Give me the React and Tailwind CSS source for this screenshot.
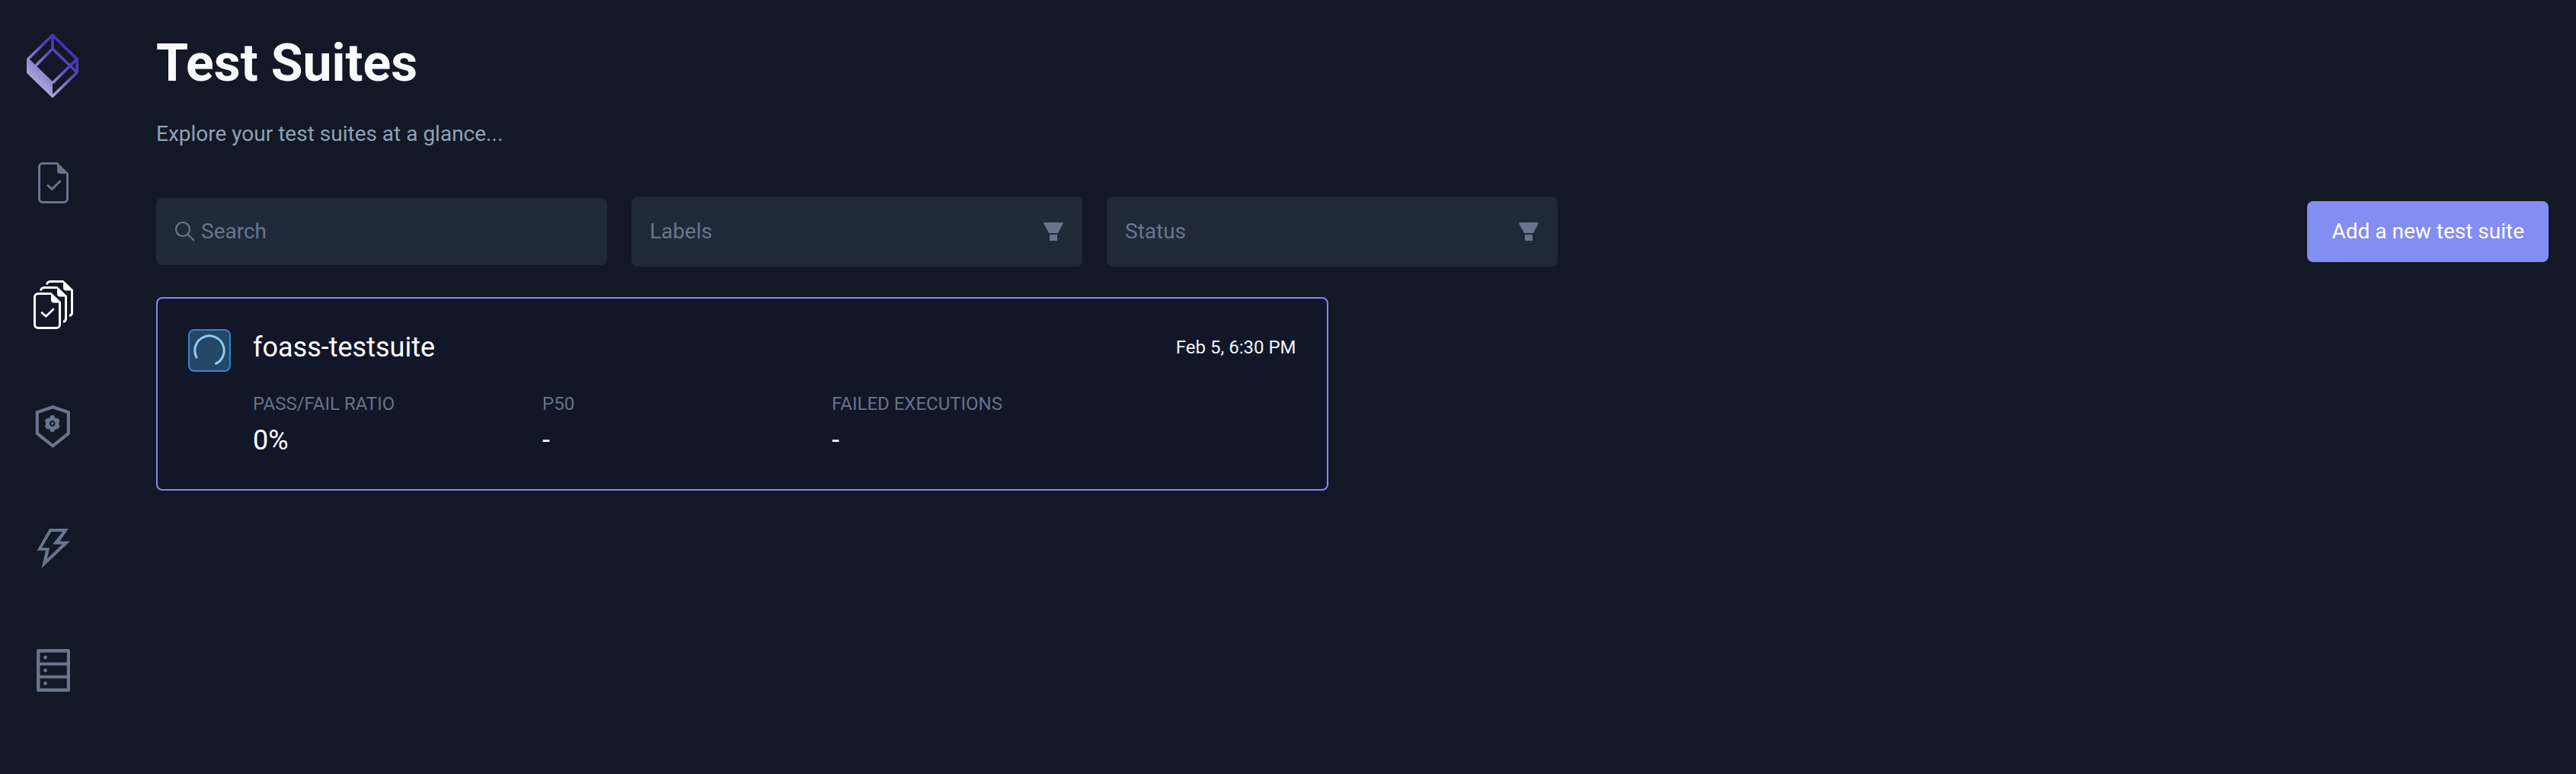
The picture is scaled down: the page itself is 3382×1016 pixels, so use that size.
import React from "react";

function Logo() {
  return (
    <svg width="70" height="84" viewBox="35 44 70 84" fill="none" className="overflow-visible" aria-hidden="true">
      <defs>
        <linearGradient id="logo-fade" gradientUnits="userSpaceOnUse" x1="42" y1="114" x2="88" y2="64">
          <stop offset="0" stopColor="#b5b5dc" />
          <stop offset="0.35" stopColor="#8f87cf" />
          <stop offset="0.7" stopColor="#5a48bd" />
          <stop offset="1" stopColor="#4a2fbd" />
        </linearGradient>
      </defs>
      <g stroke="url(#logo-fade)" strokeWidth="3.6" strokeLinejoin="round">
        <path d="M69 46 L101.2 77.5 V95 L69 126.2 L36.8 95 V77.5 Z" />
        <path d="M69.01 46 L69 64 L101 95" />
        <path d="M69 64 L47 86" />
        <path d="M101 77.5 L69 109" />
      </g>
      <path d="M35 77 L38 77 L69 107 V127.5 L35 95.5 Z" fill="url(#logo-fade)" />
    </svg>
  );
}

function TestIcon() {
  return (
    <svg width="40" height="54" viewBox="50 213 40 54" fill="none" stroke="currentColor" strokeWidth="3" aria-hidden="true">
      <path d="M75.5 214.5 H56 a4.5 4.5 0 0 0 -4.5 4.5 V261 a4.5 4.5 0 0 0 4.5 4.5 H84 a4.5 4.5 0 0 0 4.5 -4.5 V228" />
      <path d="M75 213 L90 227.5 V228 H79 a4 4 0 0 1 -4 -4 Z" fill="currentColor" stroke="none" />
      <path d="M63 243.5 L68.3 248.3 L78.8 238" strokeLinecap="round" />
    </svg>
  );
}

function TestSuiteIcon() {
  return (
    <svg width="52" height="64" viewBox="44 368 52 64" fill="none" stroke="currentColor" strokeWidth="3" aria-hidden="true">
      <path d="M67 385.5 H50 a4.5 4.5 0 0 0 -4.5 4.5 V426 a4.5 4.5 0 0 0 4.5 4.5 H74 a4.5 4.5 0 0 0 4.5 -4.5 V397" />
      <path d="M67 384 L80 396.5 V397.5 H71 a4 4 0 0 1 -4 -4 Z" fill="currentColor" stroke="none" />
      <path d="M55 410.5 L60.3 415.3 L70 406" strokeWidth="2.6" strokeLinecap="round" />
      <path d="M53.5 381.5 a4.5 4.5 0 0 1 4.5 -4 H75 M86.5 389 V418 a4.5 4.5 0 0 1 -3.5 4.5" />
      <path d="M75 376 L88 388.5 V389.5 H79 a4 4 0 0 1 -4 -4 Z" fill="currentColor" stroke="none" />
      <path d="M61.5 373.5 a4.5 4.5 0 0 1 4.5 -4 H83 M94.5 381 V410 a4.5 4.5 0 0 1 -3.5 4.5" />
      <path d="M83 368 L96 380.5 V381.5 H87 a4 4 0 0 1 -4 -4 Z" fill="currentColor" stroke="none" />
    </svg>
  );
}

function ShieldIcon() {
  return (
    <svg width="46" height="56" viewBox="47 532 46 56" fill="none" stroke="currentColor" className="overflow-visible" aria-hidden="true">
      <path d="M69.3 534.3 L89.8 541.3 V569 L69.3 585.3 L48.8 569 V541.3 Z" strokeWidth="4.2" />
      <g strokeWidth="5.4">
        <path d="M68.7 545.3 V550 M68.7 562 V566.7" />
        <path d="M59.9 550.9 L63.5 553 M73.9 559 L77.5 561.1" />
        <path d="M77.5 550.9 L73.9 553 M63.5 559 L59.9 561.1" />
      </g>
      <circle cx="68.7" cy="556" r="6.2" strokeWidth="5" />
      <circle cx="68.7" cy="556" r="1.7" fill="currentColor" stroke="none" />
    </svg>
  );
}

function TriggerIcon() {
  return (
    <svg width="44" height="52" viewBox="48 694 44 52" fill="currentColor" fillRule="evenodd" aria-hidden="true">
      <path d="M65 694 H90 L78.5 710.5 H92 L54.5 746 L60 722.8 H48.5 Z M67.3 698 L55 719 H65.2 L62 733.5 L81.5 714.5 H69 L82.2 698 Z" />
    </svg>
  );
}

function ExecutorIcon() {
  return (
    <svg width="44" height="56" viewBox="48 852 44 56" aria-hidden="true">
      <path
        fill="currentColor"
        fillRule="evenodd"
        d="M50 852 H90 a2 2 0 0 1 2 2 V906 a2 2 0 0 1 -2 2 H50 a2 2 0 0 1 -2 -2 V854 a2 2 0 0 1 2 -2 Z M52.5 856.5 V869.5 H87.8 V856.5 Z M52.5 873.5 V886.5 H87.8 V873.5 Z M52.5 890.5 V903.5 H87.8 V890.5 Z"
      />
      <g fill="currentColor">
        <circle cx="59.5" cy="863" r="2.4" />
        <circle cx="59.5" cy="880" r="2.4" />
        <circle cx="59.5" cy="897" r="2.4" />
      </g>
    </svg>
  );
}

function SearchIcon() {
  return (
    <svg width="26" height="26" viewBox="0 0 26 26" fill="none" stroke="currentColor" strokeWidth="2.2" aria-hidden="true">
      <circle cx="10" cy="10" r="9" />
      <path d="M16.3 16.3 L25 25" />
    </svg>
  );
}

function FunnelIcon() {
  return (
    <svg width="26" height="24" viewBox="0 0 26 24" fill="currentColor" aria-hidden="true">
      <path d="M1 0 H25 a1 1 0 0 1 0.7 1.4 L19 14 H7 L0.3 1.4 A1 1 0 0 1 1 0 Z" />
      <path d="M8 16 H18 V24 H8 Z" />
    </svg>
  );
}

function RunningIcon() {
  return (
    <span className="flex size-14 shrink-0 rounded-lg border-2 border-[#3b82c4] bg-[#234868] text-[#90cdf4]">
      <svg width="52" height="52" viewBox="2 2 52 52" fill="none" stroke="currentColor" strokeWidth="3" strokeLinecap="round" role="img" aria-label="Running">
        <path d="M11 37 A19.2 19.2 0 1 1 36.5 45.3" />
      </svg>
    </span>
  );
}

const NAV = [
  { label: "Tests", Icon: TestIcon },
  { label: "Test Suites", Icon: TestSuiteIcon, active: true },
  { label: "Policies", Icon: ShieldIcon },
  { label: "Triggers", Icon: TriggerIcon },
  { label: "Executors", Icon: ExecutorIcon },
];

const METRICS = [
  { name: "PASS/FAIL RATIO", value: "0%" },
  { name: "P50", value: "-" },
  { name: "FAILED EXECUTIONS", value: "-" },
];

function Sidebar() {
  return (
    <aside className="flex w-[140px] shrink-0 flex-col items-center pt-11">
      <a href="#home" aria-label="Home" className="flex">
        <Logo />
      </a>
      <nav className="mt-8 flex flex-col">
        {NAV.map(({ label, Icon, active }) => (
          <a
            key={label}
            href="#nav"
            aria-label={label}
            aria-current={active ? "page" : undefined}
            className={
              "flex h-40 w-20 items-center justify-center " + (active ? "text-white" : "text-[#68758d]")
            }
          >
            <Icon />
          </a>
        ))}
      </nav>
    </aside>
  );
}

function FilterSelect({ label }) {
  return (
    <div className="grid w-[592px] items-center rounded-lg bg-[#202938] text-[#68758d]">
      <select
        aria-label={label}
        className="col-start-1 row-start-1 h-[92px] w-full appearance-none rounded-lg bg-transparent pl-6 pr-16 text-[28px] outline-none"
      >
        <option>{label}</option>
      </select>
      <span className="pointer-events-none col-start-1 row-start-1 justify-self-end pr-[25px]">
        <FunnelIcon />
      </span>
    </div>
  );
}

function Filters() {
  return (
    <div className="flex items-center gap-8">
      <label className="flex h-[88px] w-[592px] items-center gap-2 rounded-lg bg-[#202938] pl-[25px] text-[#68758d]">
        <SearchIcon />
        <input
          type="text"
          aria-label="Search"
          placeholder="Search"
          className="min-w-0 flex-1 bg-transparent text-[28px] outline-none placeholder:text-[#68758d]"
        />
      </label>
      <FilterSelect label="Labels" />
      <FilterSelect label="Status" />
      <button
        type="button"
        className="ml-auto h-20 rounded-lg bg-[#848df2] px-8 text-[28px] text-white"
      >
        Add a new test suite
      </button>
    </div>
  );
}

function SuiteCard() {
  return (
    <article className="flex gap-[29px] rounded-lg border-2 border-[#818bf0] bg-[#111629] p-10 text-white">
      <RunningIcon />
      <div className="min-w-0 flex-1">
        <div className="flex items-center justify-between">
          <h2 className="text-[36px] leading-[48px]">foass-testsuite</h2>
          <time className="text-[24px] leading-8 text-slate-100">Feb 5, 6:30 PM</time>
        </div>
        <dl className="mt-[34px] grid grid-cols-[380px_380px_1fr]">
          {METRICS.map((m) => (
            <div key={m.name}>
              <dt className="text-[24px] leading-8 text-[#667388]">{m.name}</dt>
              <dd className="mt-2 text-[36px] leading-[48px]">{m.value}</dd>
            </div>
          ))}
        </dl>
      </div>
    </article>
  );
}

export default function App() {
  return (
    <div className="flex min-h-screen bg-[#121826] font-['Roboto',sans-serif]">
      <Sidebar />
      <main className="min-w-0 flex-1 pb-10 pl-[65px] pr-9 pt-[42px]">
        <h1 className="text-[68px] font-bold leading-[82px] text-slate-50">Test Suites</h1>
        <p className="mt-8 text-[28px] leading-[40px] text-slate-400">Explore your test suites at a glance...</p>
        <div className="mt-[62px]">
          <Filters />
        </div>
        <section className="mt-10 grid grid-cols-2 gap-16">
          <SuiteCard />
        </section>
      </main>
    </div>
  );
}
